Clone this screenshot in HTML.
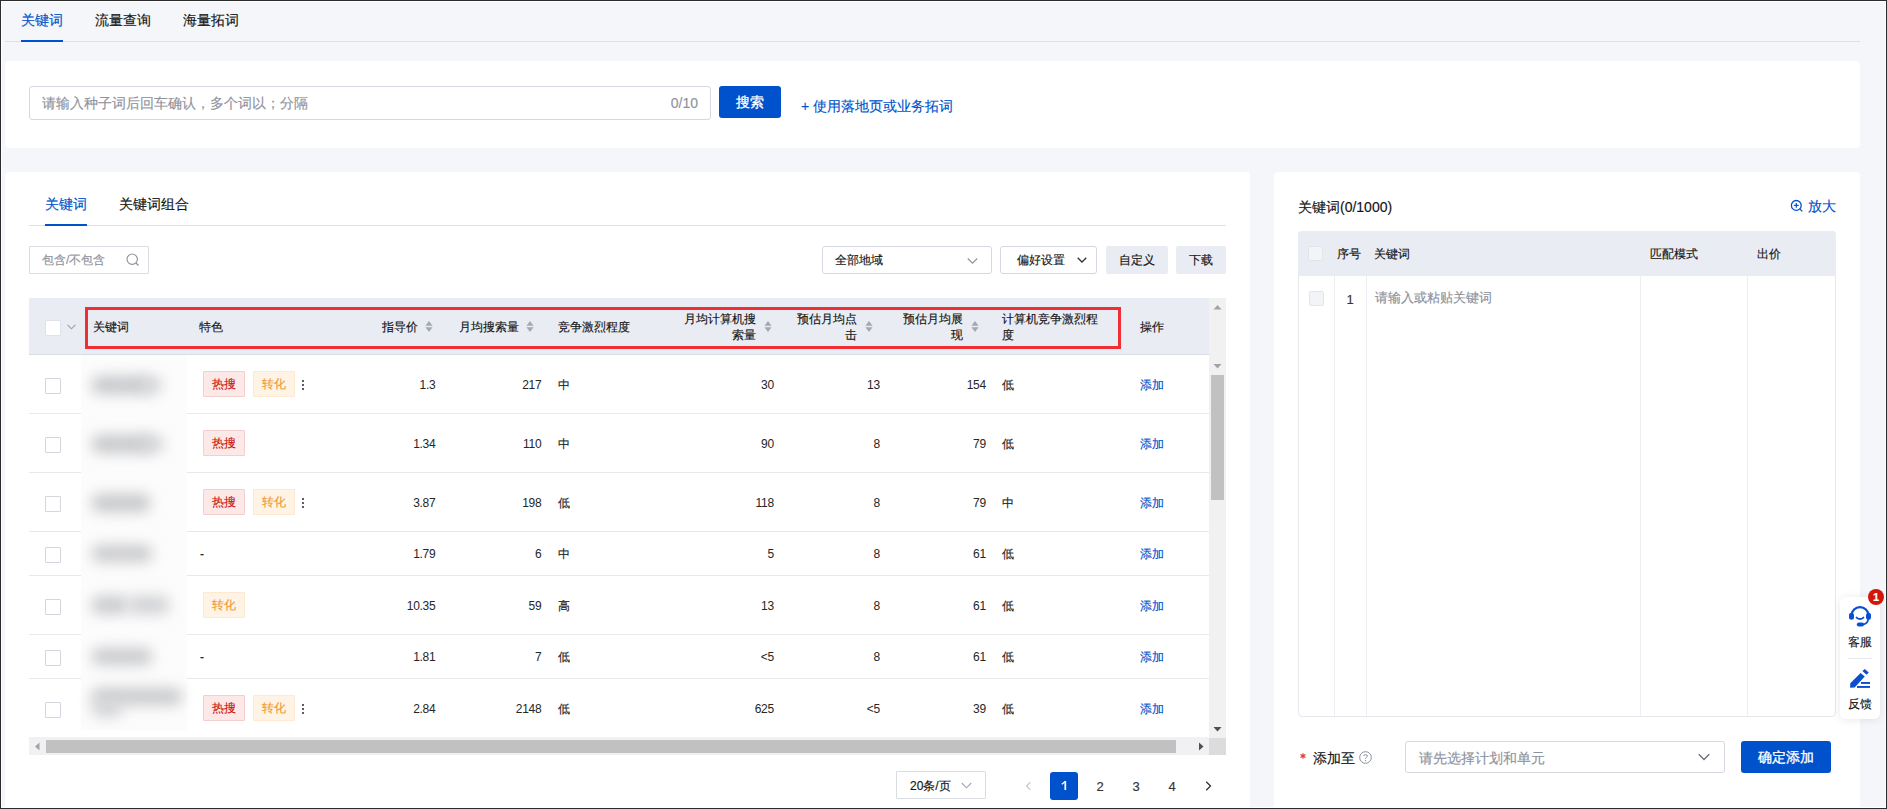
<!DOCTYPE html><html><head><meta charset="utf-8"><style>
*{margin:0;padding:0;box-sizing:border-box}
html,body{width:1887px;height:809px;overflow:hidden;background:#2b2b2b}
body{font-family:"Liberation Sans",sans-serif;position:relative}
.t{position:absolute;white-space:nowrap;-webkit-text-stroke-width:0.15px}
.n{-webkit-text-stroke-width:0}
.b{position:absolute}
svg{position:absolute;overflow:visible}
</style></head><body>
<div class="b" style="left:1px;top:1px;width:1885px;height:807px;background:#fff"></div>
<div class="b" style="left:2px;top:2px;width:1883px;height:805px;background:#f5f6fa"></div>
<div class="t" style="left:21px;top:10.0px;font-size:14px;line-height:20px;color:#0052cc;">关键词</div>
<div class="t" style="left:95px;top:10.0px;font-size:14px;line-height:20px;color:#141414;">流量查询</div>
<div class="t" style="left:183px;top:10.0px;font-size:14px;line-height:20px;color:#141414;">海量拓词</div>
<div class="b" style="left:5px;top:41px;width:1855px;height:1px;background:#dde0e8"></div>
<div class="b" style="left:21px;top:40px;width:42px;height:2px;background:#0052cc"></div>
<div class="b" style="left:5px;top:61px;width:1855px;height:87px;background:#fff;border-radius:4px"></div>
<div class="b" style="left:29px;top:86px;width:682px;height:34px;border:1px solid #d5d8e0;border-radius:3px;background:#fff"></div>
<div class="t" style="left:42px;top:93.0px;font-size:14px;line-height:20px;color:#8f939d;">请输入种子词后回车确认，多个词以；分隔</div>
<div class="t" style="right:1189px;top:93.0px;font-size:14px;line-height:20px;color:#8f939d;text-align:right;">0/10</div>
<div class="b" style="left:719px;top:86px;width:62px;height:32px;background:#0052cc;border-radius:3px"></div>
<div class="t" style="left:719.0px;width:62px;top:92.0px;font-size:14px;line-height:20px;color:#fff;text-align:center;-webkit-text-stroke:0.3px #fff;">搜索</div>
<div class="t" style="left:801px;top:96.0px;font-size:14px;line-height:20px;color:#0052cc;">+ 使用落地页或业务拓词</div>
<div class="b" style="left:5px;top:172px;width:1245px;height:635px;background:#fff;border-radius:4px 4px 0 0"></div>
<div class="t" style="left:45px;top:194.0px;font-size:14px;line-height:20px;color:#0052cc;">关键词</div>
<div class="t" style="left:119px;top:194.0px;font-size:14px;line-height:20px;color:#141414;">关键词组合</div>
<div class="b" style="left:29px;top:225px;width:1197px;height:1px;background:#dde0e8"></div>
<div class="b" style="left:45px;top:224px;width:42px;height:2px;background:#0052cc"></div>
<div class="b" style="left:29px;top:246px;width:120px;height:28px;border:1px solid #d9dce3;border-radius:1px"></div>
<div class="t" style="left:42px;top:250.5px;font-size:12px;line-height:18px;color:#8f939d;">包含/不包含</div>
<svg style="left:126px;top:253px" width="14" height="14" viewBox="0 0 14 14"><circle cx="6.2" cy="6.2" r="5.2" fill="none" stroke="#8a8e99" stroke-width="1.1"/><line x1="10" y1="10" x2="12.5" y2="12.5" stroke="#8a8e99" stroke-width="1.2"/></svg>
<div class="b" style="left:822px;top:246px;width:170px;height:28px;border:1px solid #d5d8e0;border-radius:3px"></div>
<div class="t" style="left:835px;top:250.5px;font-size:12px;line-height:18px;color:#141414;">全部地域</div>
<svg style="left:967px;top:257px" width="11" height="8" viewBox="0 0 11 8"><polyline points="0.8,1.5 5.5,6.2 10.2,1.5" fill="none" stroke="#9095a0" stroke-width="1.2"/></svg>
<div class="b" style="left:1000px;top:246px;width:97px;height:28px;border:1px solid #d5d8e0;border-radius:3px"></div>
<div class="t" style="left:1017px;top:250.5px;font-size:12px;line-height:18px;color:#141414;">偏好设置</div>
<svg style="left:1077px;top:256px" width="10" height="8" viewBox="0 0 10 8"><polyline points="0.7,1.7 5,6 9.3,1.7" fill="none" stroke="#333" stroke-width="1.3"/></svg>
<div class="b" style="left:1106px;top:246px;width:62px;height:28px;background:#e9ecf3;border-radius:2px"></div>
<div class="t" style="left:1106.0px;width:62px;top:250.5px;font-size:12px;line-height:18px;color:#141414;text-align:center;">自定义</div>
<div class="b" style="left:1176px;top:246px;width:50px;height:28px;background:#e9ecf3;border-radius:2px"></div>
<div class="t" style="left:1176.0px;width:50px;top:250.5px;font-size:12px;line-height:18px;color:#141414;text-align:center;">下载</div>
<div class="b" style="left:29px;top:298px;width:1180px;height:56px;background:#e9ecf3"></div>
<div class="b" style="left:29px;top:354px;width:1180px;height:1px;background:#d9dde6"></div>
<div class="b" style="left:45px;top:320px;width:16px;height:16px;background:#fff;border:1px solid #dfe2ea;border-radius:2px"></div>
<svg style="left:67px;top:324px" width="9" height="6" viewBox="0 0 9 6"><polyline points="0.6,0.8 4.5,4.8 8.4,0.8" fill="none" stroke="#9aa0ab" stroke-width="1.1"/></svg>
<div class="t" style="left:93px;top:317.5px;font-size:12px;line-height:18px;color:#141414;">关键词</div>
<div class="t" style="left:199px;top:317.5px;font-size:12px;line-height:18px;color:#141414;">特色</div>
<div class="t" style="left:381.5px;top:317.5px;font-size:12px;line-height:18px;color:#141414;">指导价</div>
<svg style="left:424.5px;top:320.5px" width="8" height="11" viewBox="0 0 8 11"><path d="M4 0 L7.6 4.8 L0.4 4.8 Z" fill="#a4a8b4"/><path d="M4 11 L7.6 6.2 L0.4 6.2 Z" fill="#a4a8b4"/></svg>
<div class="t" style="left:459px;top:317.5px;font-size:12px;line-height:18px;color:#141414;">月均搜索量</div>
<svg style="left:525.5px;top:320.5px" width="8" height="11" viewBox="0 0 8 11"><path d="M4 0 L7.6 4.8 L0.4 4.8 Z" fill="#a4a8b4"/><path d="M4 11 L7.6 6.2 L0.4 6.2 Z" fill="#a4a8b4"/></svg>
<div class="t" style="left:557.5px;top:317.5px;font-size:12px;line-height:18px;color:#141414;">竞争激烈程度</div>
<div class="t" style="right:1131px;top:310.5px;font-size:12px;line-height:16px;color:#141414;text-align:right">月均计算机搜<br>索量</div>
<svg style="left:763.5px;top:320.5px" width="8" height="11" viewBox="0 0 8 11"><path d="M4 0 L7.6 4.8 L0.4 4.8 Z" fill="#a4a8b4"/><path d="M4 11 L7.6 6.2 L0.4 6.2 Z" fill="#a4a8b4"/></svg>
<div class="t" style="right:1030px;top:310.5px;font-size:12px;line-height:16px;color:#141414;text-align:right">预估月均点<br>击</div>
<svg style="left:864.5px;top:320.5px" width="8" height="11" viewBox="0 0 8 11"><path d="M4 0 L7.6 4.8 L0.4 4.8 Z" fill="#a4a8b4"/><path d="M4 11 L7.6 6.2 L0.4 6.2 Z" fill="#a4a8b4"/></svg>
<div class="t" style="right:924px;top:310.5px;font-size:12px;line-height:16px;color:#141414;text-align:right">预估月均展<br>现</div>
<svg style="left:970.5px;top:320.5px" width="8" height="11" viewBox="0 0 8 11"><path d="M4 0 L7.6 4.8 L0.4 4.8 Z" fill="#a4a8b4"/><path d="M4 11 L7.6 6.2 L0.4 6.2 Z" fill="#a4a8b4"/></svg>
<div class="t" style="left:1002px;top:310.5px;font-size:12px;line-height:16px;color:#141414">计算机竞争激烈程<br>度</div>
<div class="t" style="left:1140px;top:317.5px;font-size:12px;line-height:18px;color:#141414;">操作</div>
<div class="b" style="left:85px;top:307px;width:1036px;height:42px;border:3px solid #ef2f35"></div>
<div class="b" style="left:29px;top:413px;width:1180px;height:1px;background:#e8e9ec"></div>
<div class="b" style="left:45px;top:378px;width:16px;height:16px;background:#fff;border:1px solid #d3d6dd;border-radius:1px"></div>
<div class="b" style="left:203px;top:371px;width:42px;height:26px;background:#fce8e7;border:1px solid #f5cfcd;border-radius:1px"></div>
<div class="t" style="left:203.0px;width:42px;top:374.5px;font-size:12px;line-height:18px;color:#c9160e;text-align:center;">热搜</div>
<div class="b" style="left:253px;top:371px;width:42px;height:26px;background:#fff3e6;border:1px solid #fde8d0;border-radius:1px"></div>
<div class="t" style="left:253.0px;width:42px;top:374.5px;font-size:12px;line-height:18px;color:#f09a35;text-align:center;">转化</div>
<div class="b" style="left:302px;top:380px;width:2px;height:2px;background:#5a5d65"></div>
<div class="b" style="left:302px;top:384px;width:2px;height:2px;background:#5a5d65"></div>
<div class="b" style="left:302px;top:388px;width:2px;height:2px;background:#5a5d65"></div>
<div class="t n" style="right:1451.7px;top:375.5px;font-size:12px;line-height:18px;color:#262626;text-align:right;letter-spacing:-0.3px;">1.3</div>
<div class="t n" style="right:1345.7px;top:375.5px;font-size:12px;line-height:18px;color:#262626;text-align:right;letter-spacing:-0.3px;">217</div>
<div class="t" style="left:558px;top:375.5px;font-size:12px;line-height:18px;color:#262626;">中</div>
<div class="t n" style="right:1113.2px;top:375.5px;font-size:12px;line-height:18px;color:#262626;text-align:right;letter-spacing:-0.3px;">30</div>
<div class="t n" style="right:1007.2px;top:375.5px;font-size:12px;line-height:18px;color:#262626;text-align:right;letter-spacing:-0.3px;">13</div>
<div class="t n" style="right:901.2px;top:375.5px;font-size:12px;line-height:18px;color:#262626;text-align:right;letter-spacing:-0.3px;">154</div>
<div class="t" style="left:1002px;top:375.5px;font-size:12px;line-height:18px;color:#262626;">低</div>
<div class="t" style="left:1140px;top:375.5px;font-size:12px;line-height:18px;color:#0052cc;">添加</div>
<div class="b" style="left:29px;top:472px;width:1180px;height:1px;background:#e8e9ec"></div>
<div class="b" style="left:45px;top:437px;width:16px;height:16px;background:#fff;border:1px solid #d3d6dd;border-radius:1px"></div>
<div class="b" style="left:203px;top:430px;width:42px;height:26px;background:#fce8e7;border:1px solid #f5cfcd;border-radius:1px"></div>
<div class="t" style="left:203.0px;width:42px;top:433.5px;font-size:12px;line-height:18px;color:#c9160e;text-align:center;">热搜</div>
<div class="t n" style="right:1451.7px;top:434.5px;font-size:12px;line-height:18px;color:#262626;text-align:right;letter-spacing:-0.3px;">1.34</div>
<div class="t n" style="right:1345.7px;top:434.5px;font-size:12px;line-height:18px;color:#262626;text-align:right;letter-spacing:-0.3px;">110</div>
<div class="t" style="left:558px;top:434.5px;font-size:12px;line-height:18px;color:#262626;">中</div>
<div class="t n" style="right:1113.2px;top:434.5px;font-size:12px;line-height:18px;color:#262626;text-align:right;letter-spacing:-0.3px;">90</div>
<div class="t n" style="right:1007.2px;top:434.5px;font-size:12px;line-height:18px;color:#262626;text-align:right;letter-spacing:-0.3px;">8</div>
<div class="t n" style="right:901.2px;top:434.5px;font-size:12px;line-height:18px;color:#262626;text-align:right;letter-spacing:-0.3px;">79</div>
<div class="t" style="left:1002px;top:434.5px;font-size:12px;line-height:18px;color:#262626;">低</div>
<div class="t" style="left:1140px;top:434.5px;font-size:12px;line-height:18px;color:#0052cc;">添加</div>
<div class="b" style="left:29px;top:531px;width:1180px;height:1px;background:#e8e9ec"></div>
<div class="b" style="left:45px;top:496px;width:16px;height:16px;background:#fff;border:1px solid #d3d6dd;border-radius:1px"></div>
<div class="b" style="left:203px;top:489px;width:42px;height:26px;background:#fce8e7;border:1px solid #f5cfcd;border-radius:1px"></div>
<div class="t" style="left:203.0px;width:42px;top:492.5px;font-size:12px;line-height:18px;color:#c9160e;text-align:center;">热搜</div>
<div class="b" style="left:253px;top:489px;width:42px;height:26px;background:#fff3e6;border:1px solid #fde8d0;border-radius:1px"></div>
<div class="t" style="left:253.0px;width:42px;top:492.5px;font-size:12px;line-height:18px;color:#f09a35;text-align:center;">转化</div>
<div class="b" style="left:302px;top:498px;width:2px;height:2px;background:#5a5d65"></div>
<div class="b" style="left:302px;top:502px;width:2px;height:2px;background:#5a5d65"></div>
<div class="b" style="left:302px;top:506px;width:2px;height:2px;background:#5a5d65"></div>
<div class="t n" style="right:1451.7px;top:493.5px;font-size:12px;line-height:18px;color:#262626;text-align:right;letter-spacing:-0.3px;">3.87</div>
<div class="t n" style="right:1345.7px;top:493.5px;font-size:12px;line-height:18px;color:#262626;text-align:right;letter-spacing:-0.3px;">198</div>
<div class="t" style="left:558px;top:493.5px;font-size:12px;line-height:18px;color:#262626;">低</div>
<div class="t n" style="right:1113.2px;top:493.5px;font-size:12px;line-height:18px;color:#262626;text-align:right;letter-spacing:-0.3px;">118</div>
<div class="t n" style="right:1007.2px;top:493.5px;font-size:12px;line-height:18px;color:#262626;text-align:right;letter-spacing:-0.3px;">8</div>
<div class="t n" style="right:901.2px;top:493.5px;font-size:12px;line-height:18px;color:#262626;text-align:right;letter-spacing:-0.3px;">79</div>
<div class="t" style="left:1002px;top:493.5px;font-size:12px;line-height:18px;color:#262626;">中</div>
<div class="t" style="left:1140px;top:493.5px;font-size:12px;line-height:18px;color:#0052cc;">添加</div>
<div class="b" style="left:29px;top:575px;width:1180px;height:1px;background:#e8e9ec"></div>
<div class="b" style="left:45px;top:547px;width:16px;height:16px;background:#fff;border:1px solid #d3d6dd;border-radius:1px"></div>
<div class="t" style="left:200px;top:545.0px;font-size:12px;line-height:18px;color:#262626;">-</div>
<div class="t n" style="right:1451.7px;top:545.0px;font-size:12px;line-height:18px;color:#262626;text-align:right;letter-spacing:-0.3px;">1.79</div>
<div class="t n" style="right:1345.7px;top:545.0px;font-size:12px;line-height:18px;color:#262626;text-align:right;letter-spacing:-0.3px;">6</div>
<div class="t" style="left:558px;top:545.0px;font-size:12px;line-height:18px;color:#262626;">中</div>
<div class="t n" style="right:1113.2px;top:545.0px;font-size:12px;line-height:18px;color:#262626;text-align:right;letter-spacing:-0.3px;">5</div>
<div class="t n" style="right:1007.2px;top:545.0px;font-size:12px;line-height:18px;color:#262626;text-align:right;letter-spacing:-0.3px;">8</div>
<div class="t n" style="right:901.2px;top:545.0px;font-size:12px;line-height:18px;color:#262626;text-align:right;letter-spacing:-0.3px;">61</div>
<div class="t" style="left:1002px;top:545.0px;font-size:12px;line-height:18px;color:#262626;">低</div>
<div class="t" style="left:1140px;top:545.0px;font-size:12px;line-height:18px;color:#0052cc;">添加</div>
<div class="b" style="left:29px;top:634px;width:1180px;height:1px;background:#e8e9ec"></div>
<div class="b" style="left:45px;top:599px;width:16px;height:16px;background:#fff;border:1px solid #d3d6dd;border-radius:1px"></div>
<div class="b" style="left:203px;top:592px;width:42px;height:26px;background:#fff3e6;border:1px solid #fde8d0;border-radius:1px"></div>
<div class="t" style="left:203.0px;width:42px;top:595.5px;font-size:12px;line-height:18px;color:#f09a35;text-align:center;">转化</div>
<div class="t n" style="right:1451.7px;top:596.5px;font-size:12px;line-height:18px;color:#262626;text-align:right;letter-spacing:-0.3px;">10.35</div>
<div class="t n" style="right:1345.7px;top:596.5px;font-size:12px;line-height:18px;color:#262626;text-align:right;letter-spacing:-0.3px;">59</div>
<div class="t" style="left:558px;top:596.5px;font-size:12px;line-height:18px;color:#262626;">高</div>
<div class="t n" style="right:1113.2px;top:596.5px;font-size:12px;line-height:18px;color:#262626;text-align:right;letter-spacing:-0.3px;">13</div>
<div class="t n" style="right:1007.2px;top:596.5px;font-size:12px;line-height:18px;color:#262626;text-align:right;letter-spacing:-0.3px;">8</div>
<div class="t n" style="right:901.2px;top:596.5px;font-size:12px;line-height:18px;color:#262626;text-align:right;letter-spacing:-0.3px;">61</div>
<div class="t" style="left:1002px;top:596.5px;font-size:12px;line-height:18px;color:#262626;">低</div>
<div class="t" style="left:1140px;top:596.5px;font-size:12px;line-height:18px;color:#0052cc;">添加</div>
<div class="b" style="left:29px;top:678px;width:1180px;height:1px;background:#e8e9ec"></div>
<div class="b" style="left:45px;top:650px;width:16px;height:16px;background:#fff;border:1px solid #d3d6dd;border-radius:1px"></div>
<div class="t" style="left:200px;top:648.0px;font-size:12px;line-height:18px;color:#262626;">-</div>
<div class="t n" style="right:1451.7px;top:648.0px;font-size:12px;line-height:18px;color:#262626;text-align:right;letter-spacing:-0.3px;">1.81</div>
<div class="t n" style="right:1345.7px;top:648.0px;font-size:12px;line-height:18px;color:#262626;text-align:right;letter-spacing:-0.3px;">7</div>
<div class="t" style="left:558px;top:648.0px;font-size:12px;line-height:18px;color:#262626;">低</div>
<div class="t n" style="right:1113.2px;top:648.0px;font-size:12px;line-height:18px;color:#262626;text-align:right;letter-spacing:-0.3px;">&lt;5</div>
<div class="t n" style="right:1007.2px;top:648.0px;font-size:12px;line-height:18px;color:#262626;text-align:right;letter-spacing:-0.3px;">8</div>
<div class="t n" style="right:901.2px;top:648.0px;font-size:12px;line-height:18px;color:#262626;text-align:right;letter-spacing:-0.3px;">61</div>
<div class="t" style="left:1002px;top:648.0px;font-size:12px;line-height:18px;color:#262626;">低</div>
<div class="t" style="left:1140px;top:648.0px;font-size:12px;line-height:18px;color:#0052cc;">添加</div>
<div class="b" style="left:45px;top:702px;width:16px;height:16px;background:#fff;border:1px solid #d3d6dd;border-radius:1px"></div>
<div class="b" style="left:203px;top:695px;width:42px;height:26px;background:#fce8e7;border:1px solid #f5cfcd;border-radius:1px"></div>
<div class="t" style="left:203.0px;width:42px;top:698.5px;font-size:12px;line-height:18px;color:#c9160e;text-align:center;">热搜</div>
<div class="b" style="left:253px;top:695px;width:42px;height:26px;background:#fff3e6;border:1px solid #fde8d0;border-radius:1px"></div>
<div class="t" style="left:253.0px;width:42px;top:698.5px;font-size:12px;line-height:18px;color:#f09a35;text-align:center;">转化</div>
<div class="b" style="left:302px;top:704px;width:2px;height:2px;background:#5a5d65"></div>
<div class="b" style="left:302px;top:708px;width:2px;height:2px;background:#5a5d65"></div>
<div class="b" style="left:302px;top:712px;width:2px;height:2px;background:#5a5d65"></div>
<div class="t n" style="right:1451.7px;top:699.5px;font-size:12px;line-height:18px;color:#262626;text-align:right;letter-spacing:-0.3px;">2.84</div>
<div class="t n" style="right:1345.7px;top:699.5px;font-size:12px;line-height:18px;color:#262626;text-align:right;letter-spacing:-0.3px;">2148</div>
<div class="t" style="left:558px;top:699.5px;font-size:12px;line-height:18px;color:#262626;">低</div>
<div class="t n" style="right:1113.2px;top:699.5px;font-size:12px;line-height:18px;color:#262626;text-align:right;letter-spacing:-0.3px;">625</div>
<div class="t n" style="right:1007.2px;top:699.5px;font-size:12px;line-height:18px;color:#262626;text-align:right;letter-spacing:-0.3px;">&lt;5</div>
<div class="t n" style="right:901.2px;top:699.5px;font-size:12px;line-height:18px;color:#262626;text-align:right;letter-spacing:-0.3px;">39</div>
<div class="t" style="left:1002px;top:699.5px;font-size:12px;line-height:18px;color:#262626;">低</div>
<div class="t" style="left:1140px;top:699.5px;font-size:12px;line-height:18px;color:#0052cc;">添加</div>
<div class="b" style="left:81px;top:355px;width:106px;height:375px;background:#fcfcfc"></div>
<div class="b" style="left:92px;top:376px;width:58px;height:18px;background:#c7c8cb;filter:blur(7px);border-radius:7px"></div>
<div class="b" style="left:140px;top:377px;width:22px;height:16px;background:#d3d4d7;filter:blur(7px);border-radius:7px"></div>
<div class="b" style="left:92px;top:435px;width:60px;height:18px;background:#c7c8cb;filter:blur(7px);border-radius:7px"></div>
<div class="b" style="left:140px;top:436px;width:24px;height:16px;background:#d3d4d7;filter:blur(7px);border-radius:7px"></div>
<div class="b" style="left:92px;top:494px;width:58px;height:18px;background:#c7c8cb;filter:blur(7px);border-radius:7px"></div>
<div class="b" style="left:92px;top:545px;width:60px;height:17px;background:#c9cacd;filter:blur(7px);border-radius:7px"></div>
<div class="b" style="left:92px;top:596px;width:36px;height:18px;background:#c9cacd;filter:blur(7px);border-radius:7px"></div>
<div class="b" style="left:128px;top:596px;width:41px;height:18px;background:#d0d1d4;filter:blur(7px);border-radius:7px"></div>
<div class="b" style="left:92px;top:648px;width:60px;height:17px;background:#c9cacd;filter:blur(7px);border-radius:7px"></div>
<div class="b" style="left:92px;top:688px;width:90px;height:17px;background:#c9cacd;filter:blur(7px);border-radius:7px"></div>
<div class="b" style="left:92px;top:700px;width:30px;height:17px;background:#d3d4d7;filter:blur(7px);border-radius:7px"></div>
<div class="b" style="left:1209px;top:298px;width:17px;height:440px;background:#f1f1f1"></div>
<svg style="left:1213px;top:305px" width="9" height="5" viewBox="0 0 9 5"><path d="M4.5 0 L8.5 4.5 L0.5 4.5Z" fill="#a3a3a3"/></svg>
<svg style="left:1213px;top:363.5px" width="9" height="5" viewBox="0 0 9 5"><path d="M4.5 4.5 L8.5 0 L0.5 0Z" fill="#a3a3a3"/></svg>
<div class="b" style="left:1211px;top:375px;width:13px;height:125px;background:#c1c1c1"></div>
<svg style="left:1213px;top:726.5px" width="9" height="5" viewBox="0 0 9 5"><path d="M4.5 4.5 L8.5 0 L0.5 0Z" fill="#505050"/></svg>
<div class="b" style="left:29px;top:737px;width:1180px;height:18px;background:#f1f1f3"></div>
<div class="b" style="left:1209px;top:738px;width:17px;height:17px;background:#dcdcdc"></div>
<div class="b" style="left:46px;top:740px;width:1130px;height:13px;background:#c1c1c1"></div>
<svg style="left:34.5px;top:741.5px" width="5" height="9" viewBox="0 0 5 9"><path d="M0 4.5 L4.5 0.5 L4.5 8.5Z" fill="#a3a3a3"/></svg>
<svg style="left:1199px;top:742px" width="5" height="9" viewBox="0 0 5 9"><path d="M4.5 4.5 L0 0.5 L0 8.5Z" fill="#505050"/></svg>
<div class="b" style="left:896px;top:771px;width:90px;height:28px;border:1px solid #d9dce3;border-radius:1px"></div>
<div class="t" style="left:910px;top:777.0px;font-size:12px;line-height:18px;color:#141414;">20条/页</div>
<svg style="left:961px;top:782px" width="11" height="7" viewBox="0 0 11 7"><polyline points="0.8,1 5.5,5.8 10.2,1" fill="none" stroke="#a3a7b0" stroke-width="1.1"/></svg>
<svg style="left:1025px;top:781px" width="7" height="10" viewBox="0 0 7 10"><polyline points="5.2,1.2 1.6,5 5.2,8.8" fill="none" stroke="#c2c5cc" stroke-width="1.2"/></svg>
<div class="b" style="left:1050px;top:772px;width:28px;height:28px;background:#0052cc;border-radius:3px"></div>
<svg style="left:1060px;top:780px" width="8" height="12" viewBox="0 0 8 12"><path d="M5.3 1.2 L5.3 10" stroke="#fff" stroke-width="1.7" fill="none"/><path d="M5.6 1.3 L1.8 4.3" stroke="#fff" stroke-width="1.4" fill="none"/></svg>
<div class="t" style="left:1086.0px;width:28px;top:776.5px;font-size:13px;line-height:19px;color:#333;text-align:center;">2</div>
<div class="t" style="left:1122.0px;width:28px;top:776.5px;font-size:13px;line-height:19px;color:#333;text-align:center;">3</div>
<div class="t" style="left:1158.0px;width:28px;top:776.5px;font-size:13px;line-height:19px;color:#333;text-align:center;">4</div>
<svg style="left:1205px;top:781px" width="7" height="10" viewBox="0 0 7 10"><polyline points="1.2,0.8 5.5,5 1.2,9.2" fill="none" stroke="#333" stroke-width="1.3"/></svg>
<div class="b" style="left:1274px;top:172px;width:586px;height:635px;background:#fff;border-radius:4px 4px 0 0"></div>
<div class="t" style="left:1298px;top:197.0px;font-size:14px;line-height:20px;color:#141414;">关键词(0/1000)</div>
<svg style="left:1790px;top:199px" width="14" height="14" viewBox="0 0 14 14"><circle cx="6.3" cy="6.4" r="4.9" fill="none" stroke="#0052cc" stroke-width="1.3"/><line x1="6.3" y1="4" x2="6.3" y2="8.8" stroke="#0052cc" stroke-width="1.2"/><line x1="3.9" y1="6.4" x2="8.7" y2="6.4" stroke="#0052cc" stroke-width="1.2"/><line x1="9.8" y1="9.9" x2="12.3" y2="12.4" stroke="#0052cc" stroke-width="1.3"/></svg>
<div class="t" style="left:1808px;top:196.0px;font-size:14px;line-height:20px;color:#0052cc;">放大</div>
<div class="b" style="left:1298px;top:231px;width:538px;height:486px;border:1px solid #e6e8ee;border-radius:4px;background:#fff"></div>
<div class="b" style="left:1298px;top:231px;width:538px;height:45px;background:#e9ecf3;border-radius:4px 4px 0 0"></div>
<div class="b" style="left:1308px;top:246px;width:15px;height:15px;background:#f3f4f8;border:1px solid #e3e5eb;border-radius:2px"></div>
<div class="t" style="left:1337px;top:245.0px;font-size:12px;line-height:18px;color:#141414;">序号</div>
<div class="t" style="left:1374px;top:245.0px;font-size:12px;line-height:18px;color:#141414;">关键词</div>
<div class="t" style="left:1649.5px;top:245.0px;font-size:12px;line-height:18px;color:#141414;">匹配模式</div>
<div class="t" style="left:1756.5px;top:245.0px;font-size:12px;line-height:18px;color:#141414;">出价</div>
<div class="b" style="left:1334px;top:276px;width:1px;height:440px;background:#eceef2"></div>
<div class="b" style="left:1366px;top:276px;width:1px;height:440px;background:#eceef2"></div>
<div class="b" style="left:1640px;top:276px;width:1px;height:440px;background:#eceef2"></div>
<div class="b" style="left:1747px;top:276px;width:1px;height:440px;background:#eceef2"></div>
<div class="b" style="left:1309px;top:291px;width:15px;height:15px;background:#f3f4f8;border:1px solid #e3e5eb;border-radius:2px"></div>
<div class="t" style="left:1340.0px;width:20px;top:289.5px;font-size:13px;line-height:19px;color:#333;text-align:center;">1</div>
<div class="t" style="left:1375px;top:287.5px;font-size:13px;line-height:19px;color:#8d909a;">请输入或粘贴关键词</div>
<svg style="left:1300px;top:753px" width="6" height="6" viewBox="0 0 6 6"><g stroke="#e8352c" stroke-width="1.2"><line x1="3" y1="0.2" x2="3" y2="5.8"/><line x1="0.5" y1="1.6" x2="5.5" y2="4.4"/><line x1="0.5" y1="4.4" x2="5.5" y2="1.6"/></g></svg>
<div class="t" style="left:1313px;top:748.0px;font-size:14px;line-height:20px;color:#141414;">添加至</div>
<svg style="left:1359px;top:751px" width="13" height="13" viewBox="0 0 13 13"><circle cx="6.5" cy="6.5" r="5.8" fill="none" stroke="#8a8e99" stroke-width="1"/><path d="M4.6 5 C4.6 3.2 8.4 3.2 8.4 5 C8.4 6.3 6.5 6.3 6.5 7.8" fill="none" stroke="#8a8e99" stroke-width="1"/><circle cx="6.5" cy="9.6" r="0.7" fill="#8a8e99"/></svg>
<div class="b" style="left:1405px;top:741px;width:320px;height:32px;border:1px solid #d5d8e0;border-radius:3px"></div>
<div class="t" style="left:1418.5px;top:747.5px;font-size:14px;line-height:20px;color:#8f939d;">请先选择计划和单元</div>
<svg style="left:1698px;top:753px" width="12" height="8" viewBox="0 0 12 8"><polyline points="0.8,1.3 6,6.5 11.2,1.3" fill="none" stroke="#6b6f78" stroke-width="1.3"/></svg>
<div class="b" style="left:1741px;top:741px;width:90px;height:32px;background:#0052cc;border-radius:3px"></div>
<div class="t" style="left:1741.0px;width:90px;top:747.0px;font-size:14px;line-height:20px;color:#fff;text-align:center;-webkit-text-stroke:0.3px #fff;">确定添加</div>
<div class="b" style="left:1840px;top:597px;width:40px;height:122px;background:#fff;border-radius:6px;box-shadow:0 1px 10px rgba(0,0,0,0.09)"></div>
<svg style="left:1848px;top:605px" width="24" height="22" viewBox="0 0 24 22"><path d="M3.6 10.5 A8.4 8.4 0 0 1 20.4 10.5" fill="none" stroke="#0a4fd0" stroke-width="2.3"/><rect x="1" y="7.8" width="5" height="7" rx="2.5" fill="#0a4fd0"/><rect x="18" y="7.8" width="5" height="7" rx="2.5" fill="#0a4fd0"/><path d="M8.6 12.6 Q12 15.6 15.4 12.6" fill="none" stroke="#0a4fd0" stroke-width="1.9" stroke-linecap="round"/><path d="M20.3 14 Q19.6 19 14.5 19.5" fill="none" stroke="#0a4fd0" stroke-width="1.8"/><rect x="8.8" y="17.5" width="7.2" height="4" rx="2" fill="#0a4fd0"/></svg>
<div class="t" style="left:1845.0px;width:30px;top:632.5px;font-size:12px;line-height:18px;color:#141414;text-align:center;">客服</div>
<div class="b" style="left:1848px;top:658px;width:24px;height:1px;background:#e6e8ec"></div>
<svg style="left:1848px;top:668px" width="24" height="22" viewBox="0 0 24 22"><path d="M12.6 4.9 L16.8 8.6 L6.6 19.4 L2.1 19.7 L2.3 15.2 Z" fill="#0a4fd0"/><path d="M14.4 3 L16.8 0.9 L20.8 4.4 L18.5 6.8 Z" fill="#0a4fd0"/><rect x="13" y="14" width="9" height="1.9" fill="#0a4fd0"/><rect x="9" y="18" width="13" height="1.9" fill="#0a4fd0"/></svg>
<div class="t" style="left:1845.0px;width:30px;top:695.0px;font-size:12px;line-height:18px;color:#141414;text-align:center;">反馈</div>
<div class="b" style="left:1868px;top:589px;width:16px;height:16px;background:#d2160b;border-radius:50%"></div>
<div class="t" style="left:1868.0px;width:16px;top:588.5px;font-size:11px;line-height:17px;color:#fff;text-align:center;font-weight:bold;">1</div>
</body></html>
